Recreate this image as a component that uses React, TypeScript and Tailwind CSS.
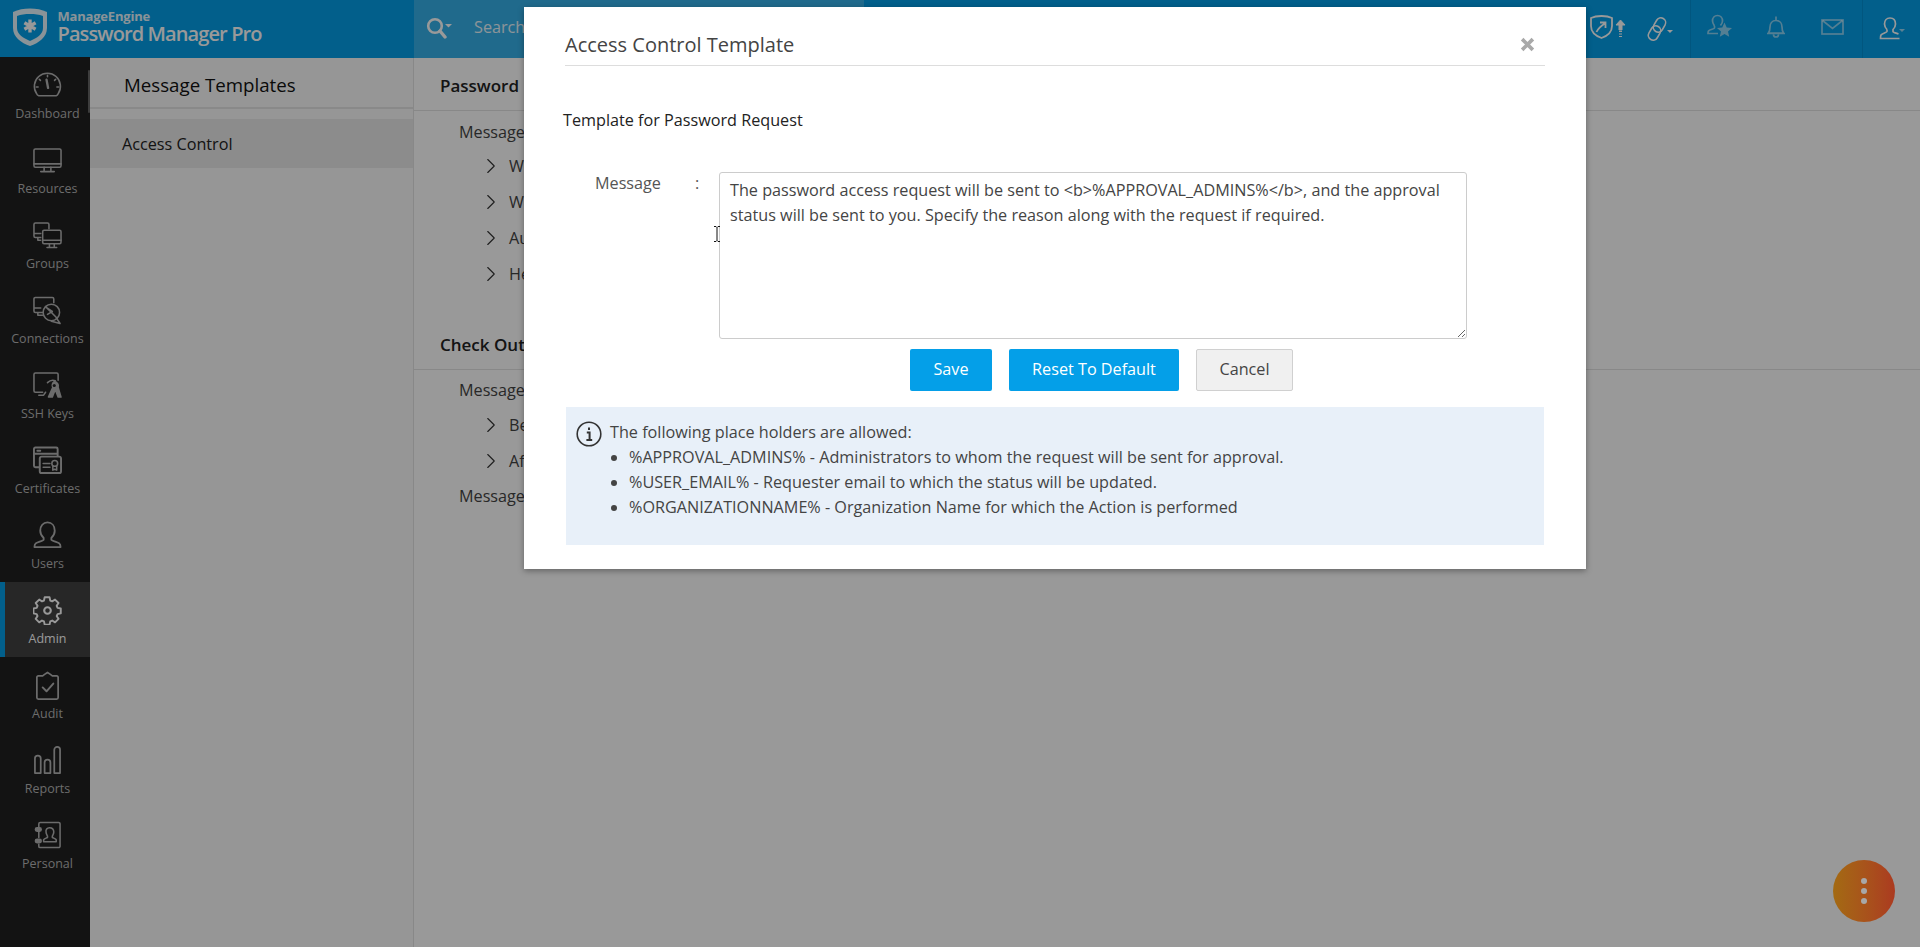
import { ChevronRight } from "lucide-react"

const navItems = [
    { label: "Dashboard", icon: <DashboardIcon /> },
    { label: "Resources", icon: <ResourcesIcon /> },
    { label: "Groups", icon: <GroupsIcon /> },
    { label: "Connections", icon: <ConnectionsIcon /> },
    { label: "SSH Keys", icon: <KeysIcon /> },
    { label: "Certificates", icon: <CertificatesIcon /> },
    { label: "Users", icon: <UserIcon /> },
    { label: "Admin", icon: <GearIcon />, active: true },
    { label: "Audit", icon: <AuditIcon /> },
    { label: "Reports", icon: <ReportsIcon /> },
    { label: "Personal", icon: <PersonalIcon /> },
]

export default function App() {
    return (
        <div className="relative h-[947px] w-full overflow-hidden bg-white font-['Open_Sans',sans-serif] text-[16.2px] text-[#333]">
            <header className="flex h-[58px] bg-[#049fe8] text-white">
                <div className="flex w-[414px] items-center pl-[11px]">
                    <ShieldLogo />
                    <div className="ml-[8.500px] flex flex-col pb-[6px]">
                        <span className="h-[16px] text-[13px] leading-[16px] font-bold tracking-[-0.2px] text-white/90">ManageEngine</span>
                        <span className="text-[20px] leading-[20px] font-semibold tracking-[-0.9px]">Password Manager Pro</span>
                    </div>
                </div>
                <div className="flex w-[450px] items-center bg-[#36b1ea] pb-[3px] pl-[12px]">
                    <SearchIcon />
                    <span className="ml-[22px] text-white/90">Search</span>
                </div>
                <div className="flex flex-1 items-center justify-end">
                    <ShieldUpIcon />
                    <LinkIcon />
                    <div className="ml-[17px] h-[58px] border-l border-[#0390d4]" />
                    <PersonStarIcon />
                    <BellIcon />
                    <MailIcon />
                    <div className="ml-[18px] h-[58px] border-l border-[#0390d4]" />
                    <div className="mr-[15px] ml-[16px]">
                        <PersonMenuIcon />
                    </div>
                </div>
            </header>

            <div className="flex h-[889px]">
                <nav className="relative -mt-px w-[90px] shrink-0 bg-[#212121]">
                    {navItems.map((item) => (
                        <div
                            key={item.label}
                            className={
                                item.active
                                    ? "flex h-[75px] flex-col items-center border-l-[5px] border-[#049fe8] bg-[#414141] pt-[12px] text-white"
                                    : "flex h-[75px] flex-col items-center pt-[12px] pl-[5px] text-[#b4b4b4]"
                            }
                        >
                            <div className="flex h-[32px] items-center">{item.icon}</div>
                            <span className="mt-[4px] text-[12.5px] leading-[18px]">{item.label}</span>
                        </div>
                    ))}
                    <div className="absolute top-[13px] right-0 h-[43px] w-[2px] rounded bg-[#666]" />
                </nav>

                <aside className="w-[324px] shrink-0 border-r border-[#e3e3e3] bg-[#fbfbfb]">
                    <div className="flex h-[51px] items-center border-b-[2px] border-[#e4e4e4] pt-[6px] pl-[34px] text-[18.700px] text-[#111]">
                        Message Templates
                    </div>
                    <div className="mt-[10px] flex h-[49px] items-center bg-[#e9e9e9] pt-[2px] pl-[32px] text-[#222]">Access Control</div>
                </aside>

                <main className="flex-1 bg-white">
                    <SectionHead title="Password" />
                    <div className="mt-[3px] -mb-[2px] flex h-[36px] items-center pl-[45px] text-[#444]">Message</div>
                    <Sub text="W" />
                    <Sub text="W" />
                    <Sub text="Au" />
                    <Sub text="He" />
                    <div className="h-[25px]" />
                    <SectionHead title="Check Out" />
                    <div className="mt-[2px] -mb-px flex h-[36px] items-center pl-[45px] text-[#444]">Message</div>
                    <Sub text="Be" />
                    <Sub text="Af" />
                    <div className="-mt-px flex h-[36px] items-center pl-[45px] text-[#444]">Message</div>
                </main>
            </div>

            <div className="absolute inset-0 bg-black/40" />

            <div className="absolute top-[860px] left-[1833px] flex h-[62px] w-[62px] flex-col items-center justify-center gap-[4px] rounded-full bg-gradient-to-r from-[#a36a12] to-[#ab3a20]">
                <span className="h-[6px] w-[6px] rounded-full bg-[#a8a8a8]" />
                <span className="h-[6px] w-[6px] rounded-full bg-[#a8a8a8]" />
                <span className="h-[6px] w-[6px] rounded-full bg-[#a8a8a8]" />
            </div>

            <div className="absolute top-[7px] left-[524px] h-[562px] w-[1062px] bg-white px-[41px] shadow-[0_2px_6px_rgba(0,0,0,0.35)]">
                <div className="flex h-[59px] items-center justify-between border-b border-[#dddddd] pt-[20px] pb-[3px]">
                    <span className="text-[20px] text-[#444]">Access Control Template</span>
                    <svg width="15" height="15" viewBox="0 0 14 14" className="mr-[10px]">
                        <path d="M2 2 12 12M12 2 2 12" stroke="#a9a9a9" strokeWidth="3.4" />
                    </svg>
                </div>
                <div className="mt-[42px] -ml-[2px] text-[#222]">Template for Password Request</div>
                <div className="mt-[40px] flex">
                    <span className="-mt-px ml-[30px] w-[100px] text-[#555]">Message</span>
                    <span className="-mt-px w-[24px] text-[#555]">:</span>
                    <textarea
                        readOnly
                        className="h-[167px] w-[748px] rounded-[3px] border border-[#cccccc] px-[10px] py-[5px] text-[16.2px] leading-[25px] text-[#444] outline-none"
                        defaultValue="The password access request will be sent to <b>%APPROVAL_ADMINS%</b>, and the approval status will be sent to you. Specify the reason along with the request if required."
                    />
                </div>
                <div className="mt-[10px] ml-[345px] flex gap-[17px]">
                    <button className="h-[42px] w-[82px] rounded-[2px] bg-[#049fe8] pb-[2px] text-white">Save</button>
                    <button className="h-[42px] w-[170px] rounded-[2px] bg-[#049fe8] pb-[2px] text-white">Reset To Default</button>
                    <button className="h-[42px] w-[97px] rounded-[2px] border border-[#d0d0d0] bg-[#f0f0f0] pb-[2px] text-[#444]">Cancel</button>
                </div>
                <div className="mt-[16px] ml-px h-[138px] w-[978px] bg-[#e8f0f9] pt-[11px] pl-[10px] leading-[25px] text-[#444]">
                    <div className="flex items-center">
                        <svg width="26" height="26" viewBox="0 0 26 26" className="mt-[3px]">
                            <circle cx="13" cy="13" r="11.8" fill="none" stroke="#333" strokeWidth="1.6" />
                            <path d="M13 6.500v2.600M10.800 11.500H13.600V18.600M10.400 19H16.200" fill="none" stroke="#333" strokeWidth="2" />
                        </svg>
                        <span className="ml-[8px]">The following place holders are allowed:</span>
                    </div>
                    <ul className="-mt-[2.500px] ml-[53px] list-disc">
                        <li>%APPROVAL_ADMINS% - Administrators to whom the request will be sent for approval.</li>
                        <li>%USER_EMAIL% - Requester email to which the status will be updated.</li>
                        <li>%ORGANIZATIONNAME% - Organization Name for which the Action is performed</li>
                    </ul>
                </div>
            </div>

            {/* text cursor caught in the screenshot */}
            <svg width="8" height="16" viewBox="0 0 8 16" className="absolute top-[226px] left-[713px]">
                <path d="M1 .5h2l1 1 1-1h2M4 1.500v13M1 15.500h2l1-1 1 1h2" fill="none" stroke="#111" strokeWidth="1" />
            </svg>
        </div>
    )
}

function SectionHead({ title }: { title: string }) {
    return (
        <div className="flex h-[53px] items-center border-b border-[#e3e3e3] pt-[3px] pl-[26px] text-[17px] font-semibold text-[#222]">
            {title}
        </div>
    )
}

function Sub({ text }: { text: string }) {
    return (
        <div className="flex h-[36px] items-center pl-[64px] text-[#444]">
            <ChevronRight size={26} strokeWidth={1} className="text-[#333]" />
            <span className="ml-[5px]">{text}</span>
        </div>
    )
}

function NavSvg({ children }: { children: React.ReactNode }) {
    return (
        <svg width="29" height="29" viewBox="0 0 30 30" fill="none" stroke="currentColor" strokeWidth="1.6" strokeLinecap="round" strokeLinejoin="round">
            {children}
        </svg>
    )
}

function DashboardIcon() {
    return (
        <NavSvg>
            <path d="M6 25.500h18a3 3 0 0 0 2-2A13.500 13.500 0 1 0 3.800 23.500a3 3 0 0 0 2.200 2z" />
            <path d="M14 9l1.600 8.500" strokeWidth="2.400" />
            <path d="M15 4.500v1.500M6.500 8.500l1.200 1.200M23.500 8.500l-1.200 1.200M3.500 16.500h1.800M24.700 16.500h1.800" />
        </NavSvg>
    )
}

function ResourcesIcon() {
    return (
        <NavSvg>
            <rect x="1" y="3" width="28" height="19" rx="1.500" />
            <path d="M1 18.500h28M11.500 22v4M18.500 22v4M8 26.500h14" />
        </NavSvg>
    )
}

function GroupsIcon() {
    return (
        <NavSvg>
            <path d="M8 17H2.500A1.500 1.500 0 0 1 1 15.500V3.500A1.500 1.500 0 0 1 2.500 2H15a1.500 1.500 0 0 1 1.500 1.500V8M1 13h7M5 17v3h3" />
            <rect x="10" y="9.500" width="19" height="14" rx="1.500" />
            <path d="M10 20h19M17 24v3M22 24v3M14.500 27.500h10" />
        </NavSvg>
    )
}

function ConnectionsIcon() {
    return (
        <NavSvg>
            <path d="M10 17H2.500A1.500 1.500 0 0 1 1 15.500V3A1.500 1.500 0 0 1 2.500 1.500H20A1.500 1.500 0 0 1 21.500 3v4M1 12.500h7M5 17v3h5" />
            <circle cx="19" cy="17" r="8.500" />
            <path d="M13 11l12 12M14 12l6 4-5 3M19 26l9 2.500-4-6" />
        </NavSvg>
    )
}

function KeysIcon() {
    return (
        <NavSvg>
            <path d="M10 22H2.500A1.500 1.500 0 0 1 1 20.500V3.500A1.500 1.500 0 0 1 2.500 2h22A1.500 1.500 0 0 1 26 3.500v6M6 25h5l2-3" />
            <path d="M15 12c2-2 5-3 8-2" />
            <path d="M22 11a4.500 4.500 0 0 1 4 6l3 10h-3l-3-8-3 8h-4l4.500-10A4.500 4.500 0 0 1 22 11z" fill="currentColor" />
            <circle cx="22" cy="15" r="1.600" fill="#212121" stroke="none" />
        </NavSvg>
    )
}

function CertificatesIcon() {
    return (
        <NavSvg>
            <path d="M6 22H2.500A1.500 1.500 0 0 1 1 20.500V3A1.500 1.500 0 0 1 2.500 1.500H24A1.500 1.500 0 0 1 25.500 3v7M1 8h24.500M4.500 5h3" strokeWidth="2" />
            <rect x="7" y="11" width="22" height="17" rx="2" strokeWidth="2" />
            <path d="M10.500 18h7M10.500 22h7" />
            <circle cx="22.500" cy="18" r="3" />
            <path d="M20.500 21v4l2-1 2 1v-4" />
        </NavSvg>
    )
}

function UserIcon() {
    return (
        <NavSvg>
            <path d="M15 1.500c4.500 0 7.500 3.500 7.500 8.500 0 3.500-2 6-3.500 7.500v1.800c0 1 5 2.200 8 3.700 1.500.8 1.500 2 1.500 4H1.500c0-2 0-3.200 1.500-4 3-1.500 8-2.700 8-3.700v-1.800C9.500 16 7.500 13.500 7.500 10c0-5 3-8.500 7.500-8.500z" strokeWidth="1.900" />
        </NavSvg>
    )
}

function GearIcon() {
    return (
        <NavSvg>
            <path
                d="M12.200 1.500h5.600l.8 3.700 2.300 1 3.200-2.100 4 4-2.100 3.200 1 2.300 3.700.8v5.600l-3.700.8-1 2.300 2.100 3.200-4 4-3.200-2.100-2.300 1-.8 3.700h-5.600l-.8-3.700-2.300-1-3.200 2.100-4-4 2.100-3.200-1-2.300-3.700-.8v-5.600l3.700-.8 1-2.300-2.100-3.200 4-4 3.200 2.100 2.300-1z"
                strokeWidth="2.200"
                transform="translate(1.100 0) scale(.9)"
            />
            <circle cx="15" cy="15" r="3.400" strokeWidth="2.200" />
        </NavSvg>
    )
}

function AuditIcon() {
    return (
        <NavSvg>
            <path d="M10 5H5.500A1.500 1.500 0 0 0 4 6.500v21A1.500 1.500 0 0 0 5.500 29h19a1.500 1.500 0 0 0 1.500-1.500v-21A1.500 1.500 0 0 0 24.500 5H20l-2-1.500-3-2-3 2z" strokeWidth="1.800" />
            <path d="M10 17l4 4 7-8" strokeWidth="2" />
        </NavSvg>
    )
}

function ReportsIcon() {
    return (
        <NavSvg>
            <path d="M2 28V13a3 3 0 0 1 6 0v15zM12 28V17a3 3 0 0 1 6 0v11zM22 28V4a3 3 0 0 1 6 0v24z" strokeWidth="1.800" />
        </NavSvg>
    )
}

function PersonalIcon() {
    return (
        <NavSvg>
            <path d="M6 7V3a1.500 1.500 0 0 1 1.500-1.500h19A1.500 1.500 0 0 1 28 3v23a1.500 1.500 0 0 1-1.500 1.500h-19A1.500 1.500 0 0 1 6 26v-2M6 11v6" />
            <rect x="2.500" y="7" width="6" height="3.500" rx="1.700" fill="currentColor" />
            <rect x="2.500" y="19" width="6" height="3.500" rx="1.700" fill="currentColor" />
            <path d="M17 7c3 0 4.500 2 4.500 4.500 0 2-1 3-1.500 4v1.500c1 .8 3.500 1 4 2.500v2h-13v-2c.5-1.500 3-1.700 4-2.500v-1.500c-.5-1-1.500-2-1.500-4C13 9 14.500 7 17 7z" />
        </NavSvg>
    )
}

function ShieldLogo() {
    return (
        <svg width="38" height="40" viewBox="0 0 38 40" className="-mt-[4px]">
            <path d="M19 1.500 C25 1.500 31 2.500 36 5 V21 C36 30 28 36 19 39 C10 36 2 30 2 21 V5 C7 2.500 13 1.500 19 1.500z" fill="#ffffff" fillOpacity="0.9" />
            <path d="M19 7 C24 7 28 7.500 32 9 V21 C32 27 26 31 19 34 C12 31 6 27 6 21 V9 C10 7.500 14 7 19 7z" fill="#049fe8" />
            <path d="M19 12.500v13M13.400 15.800l11.200 6.400M24.600 15.800l-11.200 6.400" stroke="#ffffff" strokeWidth="3.400" />
        </svg>
    )
}

function SearchIcon() {
    return (
        <svg width="26" height="22" viewBox="0 0 26 22" fill="none">
            <circle cx="9" cy="9" r="6.800" stroke="white" strokeWidth="2.600" />
            <path d="M14 14l5 6" stroke="white" strokeWidth="3.400" strokeLinecap="round" />
            <path d="M19 7h7l-3.500 3.500z" fill="white" />
        </svg>
    )
}

function ShieldUpIcon() {
    return (
        <svg width="36" height="24" viewBox="0 0 36 24" fill="none" stroke="white" strokeWidth="1.800" className="mr-[21px] -mt-[4px]">
            <path d="M11.500 1C15 1 19 1.500 22 3v8c0 6-5 10-10.500 12C6 21 1 17 1 11V3c3-1.500 7-2 10.500-2z" />
            <path d="M6.500 17 C8 13 11 11 15.500 8M10 7.500h5.500V13" />
            <path d="M26 10l4.500-5 4.500 5h-3v5h-3v-5zM29 16.500h3M29 19h3M29 21.500h3" fill="white" stroke="white" strokeWidth="1" />
        </svg>
    )
}

function LinkIcon() {
    return (
        <svg width="26" height="26" viewBox="0 0 26 26" fill="none" stroke="white" strokeWidth="1.600" className="-mt-px">
            <rect x="-4.800" y="-7.500" width="9.600" height="15" rx="4.800" transform="translate(7.500 17) rotate(30)" />
            <rect x="-4.800" y="-7.500" width="9.600" height="15" rx="4.800" transform="translate(12.500 9) rotate(30)" />
            <path d="M20 14h6l-3 3z" fill="white" stroke="none" />
        </svg>
    )
}

function PersonStarIcon() {
    return (
        <svg width="26" height="26" viewBox="0 0 26 26" fill="none" stroke="white" strokeOpacity="0.55" strokeWidth="1.700" className="ml-[16px] -mt-[4px]">
            <path d="M10.500 1.500c3 0 5 2.300 5 5.500 0 1.800-1 3.300-2 4.500M7.500 12v2c0 1-5 1.500-6 3-.5.8-.5 1.700-.5 2.500h10M10.500 1.500c-3 0-5 2.300-5 5.500 0 2 1 3.500 2 5" />
            <path d="M17.500 8.500l2.200 5 5.300.5-4 3.500 1.200 5.300-4.700-2.800-4.700 2.800 1.200-5.300-4-3.500 5.300-.5z" fill="white" fillOpacity="0.55" stroke="none" />
        </svg>
    )
}

function BellIcon() {
    return (
        <svg width="20" height="23" viewBox="0 0 20 23" fill="none" stroke="white" strokeOpacity="0.55" strokeWidth="1.700" className="ml-[33px] -mt-[5px]">
            <path d="M2.500 18c1-1.500 1.500-3 1.500-6 0-3.500 2-6.500 6-6.500s6 3 6 6.500c0 3 .5 4.500 1.500 6zM1 18.500h18M7.500 19.500a2.500 2.500 0 0 0 5 0M10 1.500v4" />
        </svg>
    )
}

function MailIcon() {
    return (
        <svg width="23" height="16" viewBox="0 0 23 16" fill="none" stroke="white" strokeOpacity="0.55" strokeWidth="1.700" className="ml-[35px] -mt-[5px]">
            <rect x="1" y="1" width="21" height="14" />
            <path d="M1.500 1.500l10 8 10-8" />
        </svg>
    )
}

function PersonMenuIcon() {
    return (
        <svg width="26" height="24" viewBox="0 0 26 24" fill="none" stroke="white" strokeWidth="1.700">
            <path d="M11 1c3.500 0 5.500 2.500 5.500 6 0 2.500-1.500 4.500-2.500 5.500v2c0 1 3 1.500 5.500 2.500M8 12.500v2c0 1-5 2-6 3.500-.5.8-.5 2-.5 3.500h19M11 1C7.500 1 5.500 3.500 5.500 7c0 2.500 1.500 4.500 2.500 5.500" />
            <path d="M20 12h6l-3 3z" fill="white" fillOpacity="0.6" stroke="none" />
        </svg>
    )
}
